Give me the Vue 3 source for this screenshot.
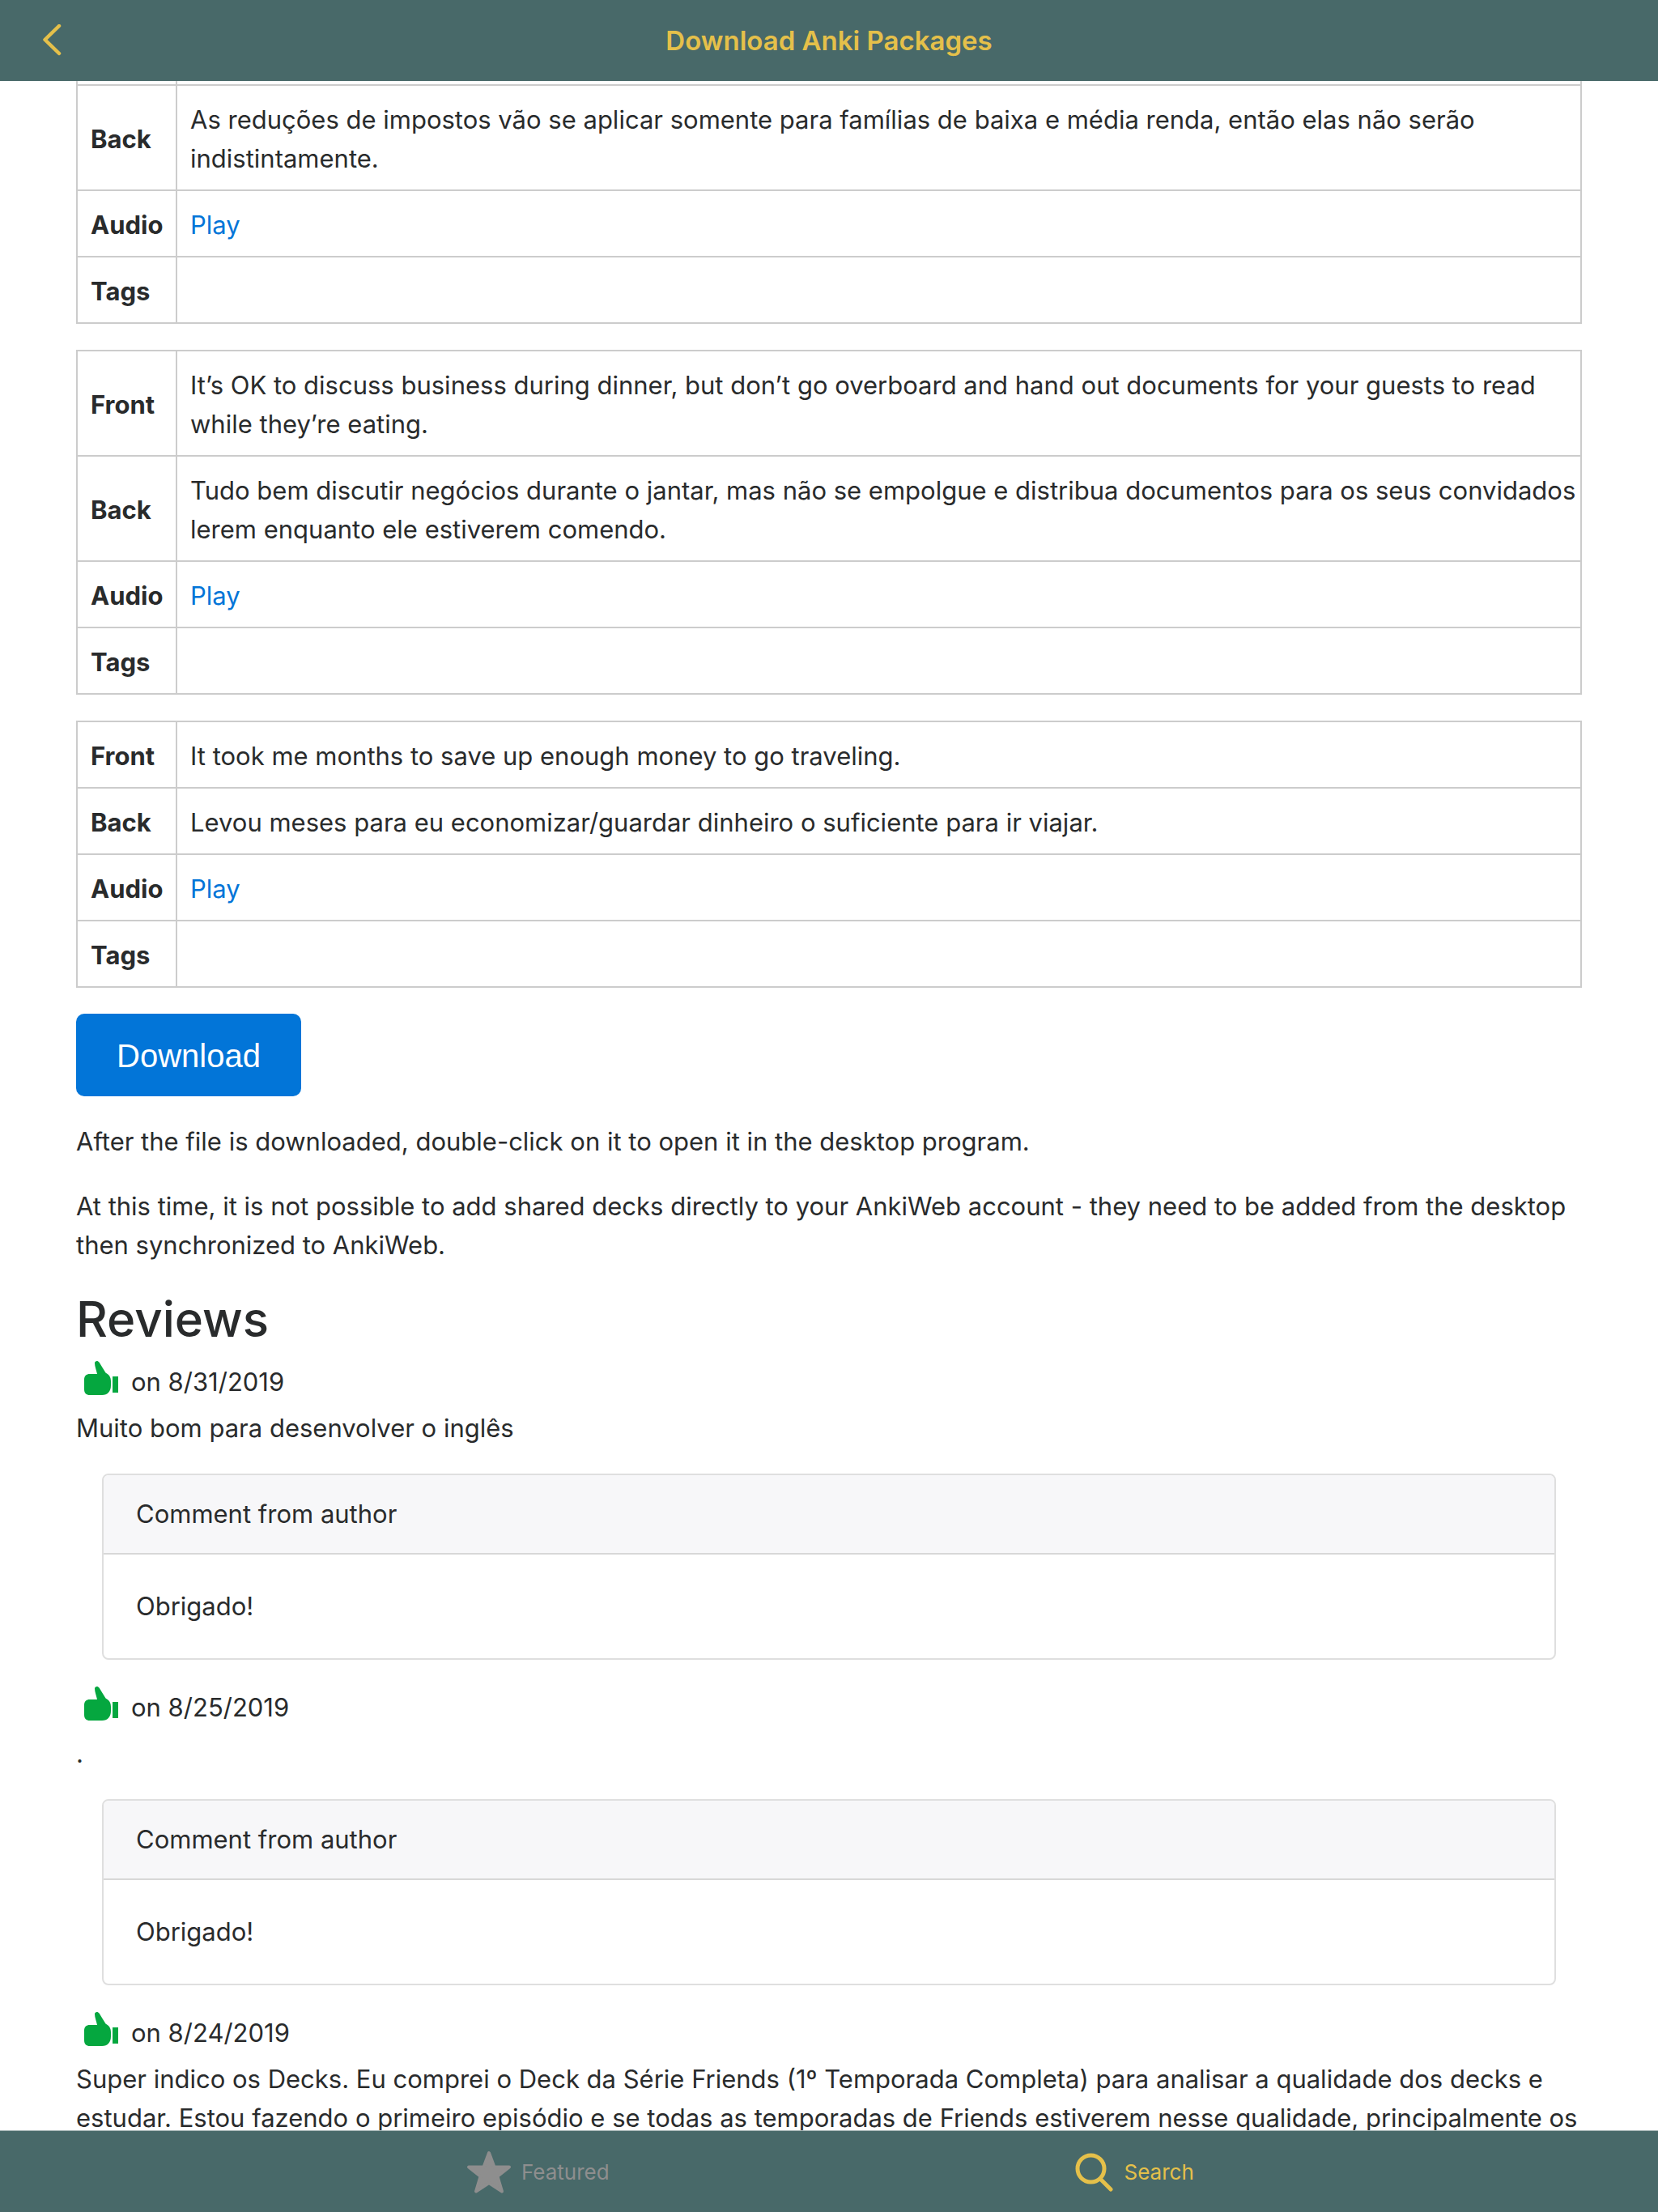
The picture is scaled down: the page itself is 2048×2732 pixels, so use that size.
<script setup>
const cards = [
  [
    { label: 'Back', text: 'As reduções de impostos vão se aplicar somente para famílias de baixa e média renda, então elas não serão indistintamente.' },
    { label: 'Audio', link: 'Play' },
    { label: 'Tags', text: '' },
  ],
  [
    { label: 'Front', text: 'It’s OK to discuss business during dinner, but don’t go overboard and hand out documents for your guests to read while they’re eating.' },
    { label: 'Back', text: 'Tudo bem discutir negócios durante o jantar, mas não se empolgue e distribua documentos para os seus convidados lerem enquanto ele estiverem comendo.' },
    { label: 'Audio', link: 'Play' },
    { label: 'Tags', text: '' },
  ],
  [
    { label: 'Front', text: 'It took me months to save up enough money to go traveling.' },
    { label: 'Back', text: 'Levou meses para eu economizar/guardar dinheiro o suficiente para ir viajar.' },
    { label: 'Audio', link: 'Play' },
    { label: 'Tags', text: '' },
  ],
]

const reviews = [
  { date: '8/31/2019', text: 'Muito bom para desenvolver o inglês', reply: 'Obrigado!' },
  { date: '8/25/2019', text: '.', reply: 'Obrigado!' },
  { date: '8/24/2019', text: 'Super indico os Decks. Eu comprei o Deck da Série Friends (1º Temporada Completa) para analisar a qualidade dos decks e estudar. Estou fazendo o primeiro episódio e se todas as temporadas de Friends estiverem nesse qualidade, principalmente os' },
]
</script>

<template>
  <div class="app">
    <header class="navbar">
      <button class="back" type="button" aria-label="Back">
        <svg width="24" height="40" viewBox="0 0 24 40" aria-hidden="true">
          <path d="M21 2 L3.500 19 L21 36" fill="none" stroke="currentColor" stroke-width="4.500" stroke-linecap="round" stroke-linejoin="round" />
        </svg>
      </button>
      <h1 class="title">Download Anki Packages</h1>
    </header>

    <main class="content">
      <table v-for="(rows, i) in cards" :key="i" class="note">
        <colgroup><col class="label-col"><col></colgroup>
        <tbody>
          <tr v-if="i === 0" class="cut-row"><td></td><td></td></tr>
          <tr v-for="row in rows" :key="row.label">
            <th scope="row">{{ row.label }}</th>
            <td><a v-if="row.link" href="#">{{ row.link }}</a><template v-else>{{ row.text }}</template></td>
          </tr>
        </tbody>
      </table>

      <button class="download" type="button">Download</button>

      <p>After the file is downloaded, double-click on it to open it in the desktop program.</p>
      <p>At this time, it is not possible to add shared decks directly to your AnkiWeb account - they need to be added from the desktop then synchronized to AnkiWeb.</p>

      <h2>Reviews</h2>
      <article v-for="review in reviews" :key="review.date" class="review">
        <div class="meta">
          <svg class="thumb" width="44" height="44" viewBox="0 0 44 44" aria-hidden="true">
            <path d="M14 3.500 C14 0.500 18 0 19.500 2.500 L27.500 15.500 C32 18 34 21 34 26 V31 C34 38.500 30 43 23 43 H8 C3.500 43 1 40.500 1 36 V24 C1 19.500 3.500 17 8 17 H17 C16 12 14 8 14 3.500 Z M36 20 H43 V40 H36 Z" fill="currentColor" />
          </svg>
          <span>on {{ review.date }}</span>
        </div>
        <div class="text">{{ review.text }}</div>
        <section v-if="review.reply" class="card">
          <div class="card-header">Comment from author</div>
          <div class="card-body">{{ review.reply }}</div>
        </section>
      </article>
    </main>

    <nav class="tabbar">
      <a class="tab" href="#">
        <svg width="56" height="56" viewBox="0 0 56 56" aria-hidden="true">
          <path d="M28 4 L34.500 21.500 H53 L38.500 33 L44 51.500 L28 41 L12 51.500 L17.500 33 L3 21.500 H21.500 Z" fill="currentColor" stroke="currentColor" stroke-width="4" stroke-linejoin="round" />
        </svg>
        <span>Featured</span>
      </a>
      <a class="tab active" href="#">
        <svg width="48" height="48" viewBox="0 0 48 48" aria-hidden="true">
          <circle cx="19.500" cy="19.500" r="16.500" fill="none" stroke="currentColor" stroke-width="5" />
          <path d="M32 33 L44 45" stroke="currentColor" stroke-width="5" stroke-linecap="round" />
        </svg>
        <span>Search</span>
      </a>
    </nav>
  </div>
</template>

<style>
body {
  margin: 0;
}
</style>

<style scoped>
.app {
  display: flex;
  flex-direction: column;
  height: 100vh;
  background: #fff;
  color: #292b2c;
  font: 400 31px/48px Inter, "Liberation Sans", sans-serif;
}

.navbar {
  display: grid;
  grid-template-columns: 1fr auto 1fr;
  align-items: center;
  flex: none;
  height: 100px;
  background: #486969;
  color: #e5c04a;
}

.back {
  display: flex;
  justify-self: start;
  margin: 0;
  padding: 0 52px;
  border: 0;
  background: none;
  color: inherit;
}

.title {
  grid-column: 2;
  margin: 0;
  font-size: 33px;
  font-weight: 600;
}

.content {
  flex: 1;
  min-height: 0;
  overflow: hidden;
  padding: 0 94px;
}

.note {
  width: 100%;
  margin: 0 0 32px;
  border-collapse: collapse;
  table-layout: fixed;
}

.label-col {
  width: 123px;
}

th,
td {
  height: 48px;
  padding: 18px 4px 14px 16px;
  border: 2px solid #ccc;
  text-align: left;
  vertical-align: middle;
}

th {
  font-weight: 700;
}

.cut-row td {
  height: 4px;
  padding: 0;
  border-top: 0;
}

a {
  color: #0275d8;
  text-decoration: none;
}

.download {
  display: block;
  margin: 0 0 32px;
  padding: 25px 50px 23px;
  border: 0;
  border-radius: 10px;
  background: #0275d8;
  color: #fff;
  font: 400 40px/54px "Liberation Sans", Arial, sans-serif;
}

p {
  margin: 0 0 32px;
}

h2 {
  margin: 0 0 16px;
  font-size: 60px;
  font-weight: 500;
  line-height: 70px;
}

.meta {
  display: flex;
  gap: 15px;
  height: 60px;
  padding-left: 9px;
  line-height: 54px;
}

.text {
  margin-bottom: 32px;
}

.thumb {
  color: #05a73f;
}

.card {
  margin: 0 32px 32px;
  border: 2px solid #dfdfdf;
  border-radius: 8px;
}

.card-header {
  padding: 24px 40px;
  border-bottom: 2px solid #d8d8d8;
  border-radius: 6px 6px 0 0;
  background: #f7f7f9;
}

.card-body {
  padding: 40px;
}

.tabbar {
  display: flex;
  justify-content: center;
  flex: none;
  height: 100px;
  border-top: 1px solid #a5b4b4;
  background: #486969;
}

.tab {
  display: flex;
  align-items: center;
  justify-content: center;
  gap: 12px;
  box-sizing: border-box;
  width: 36%;
  padding: 2px 0 0 18px;
  color: #8e8e8e;
  font-size: 26px;
}

.tab.active {
  color: #e5c04a;
}
</style>
